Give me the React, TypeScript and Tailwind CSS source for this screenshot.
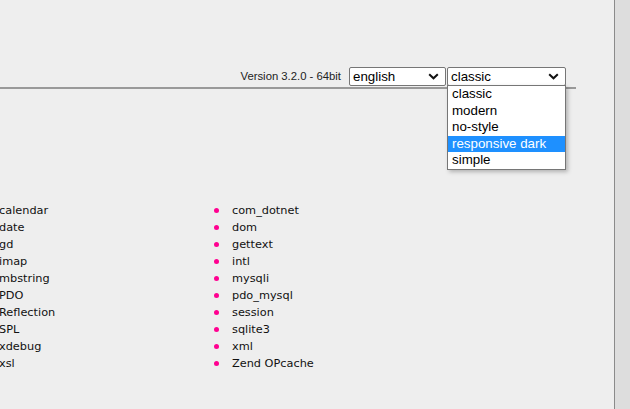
import { useState } from 'react'

const LEFT = ['calendar', 'date', 'gd', 'imap', 'mbstring', 'PDO', 'Reflection', 'SPL', 'xdebug', 'xsl']
const RIGHT = ['com_dotnet', 'dom', 'gettext', 'intl', 'mysqli', 'pdo_mysql', 'session', 'sqlite3', 'xml', 'Zend OPcache']
const STYLES = ['classic', 'modern', 'no-style', 'responsive dark', 'simple']

function Chevron() {
  return (
    <svg width="11" height="7" viewBox="0 0 11 7" className="shrink-0">
      <path d="M1.2 1.2 L5.5 5.3 L9.8 1.2" fill="none" stroke="#111" strokeWidth="2" />
    </svg>
  )
}

function FakeSelect({ value, className }: { value: string; className: string }) {
  return (
    <div
      className={`flex h-[19px] items-center justify-between rounded-[2px] border border-[#767676] bg-white pl-[3px] pr-[6px] text-[13.33px] leading-none text-black ${className}`}
    >
      <span>{value}</span>
      <Chevron />
    </div>
  )
}

export default function App() {
  const [hover] = useState('responsive dark')

  return (
    <div className="flex h-[409px] w-[630px] overflow-hidden bg-[#eeeeee] font-['Liberation_Sans',Arial,sans-serif]">
      <div className="relative w-[614px] shrink-0">
        <header className="w-[576px] border-b-2 border-[#999999] pt-[67px] pb-[1px]">
          <div className="flex items-center justify-end pr-[10px]">
            <span className="mr-[8px] text-[11.3px] text-[#222]">Version 3.2.0 - 64bit</span>
            <FakeSelect value="english" className="w-[97px]" />
            <FakeSelect value="classic" className="ml-[1px] w-[119px]" />
          </div>
        </header>

        <div className="flex pt-[113px] font-['DejaVu_Sans',Verdana,sans-serif] text-[11.3px] leading-[17px] text-[#111]">
          <ul className="ml-[-1px] w-[215px]">
            {LEFT.map((x) => (
              <li key={x}>{x}</li>
            ))}
          </ul>
          <ul>
            {RIGHT.map((x) => (
              <li key={x} className="flex items-center">
                <span className="mr-[13px] h-[5px] w-[5px] rounded-full bg-[#ff0090]" />
                {x}
              </li>
            ))}
          </ul>
        </div>

        {/* open dropdown of the style select */}
        <ul className="absolute left-[447px] top-[85px] w-[119px] border border-[#767676] bg-white py-0 text-[13.33px] leading-[16.5px] text-black shadow-[2px_2px_4px_rgba(0,0,0,0.25)]">
          {STYLES.map((s) => (
            <li key={s} className={`pl-[4px] ${s === hover ? 'bg-[#1e90ff] text-white' : ''}`}>
              {s}
            </li>
          ))}
        </ul>
      </div>
      <div className="w-[1px] shrink-0 bg-[#8a8a8a]" />
      <div className="flex-1 bg-[#dddddd]" />
    </div>
  )
}
